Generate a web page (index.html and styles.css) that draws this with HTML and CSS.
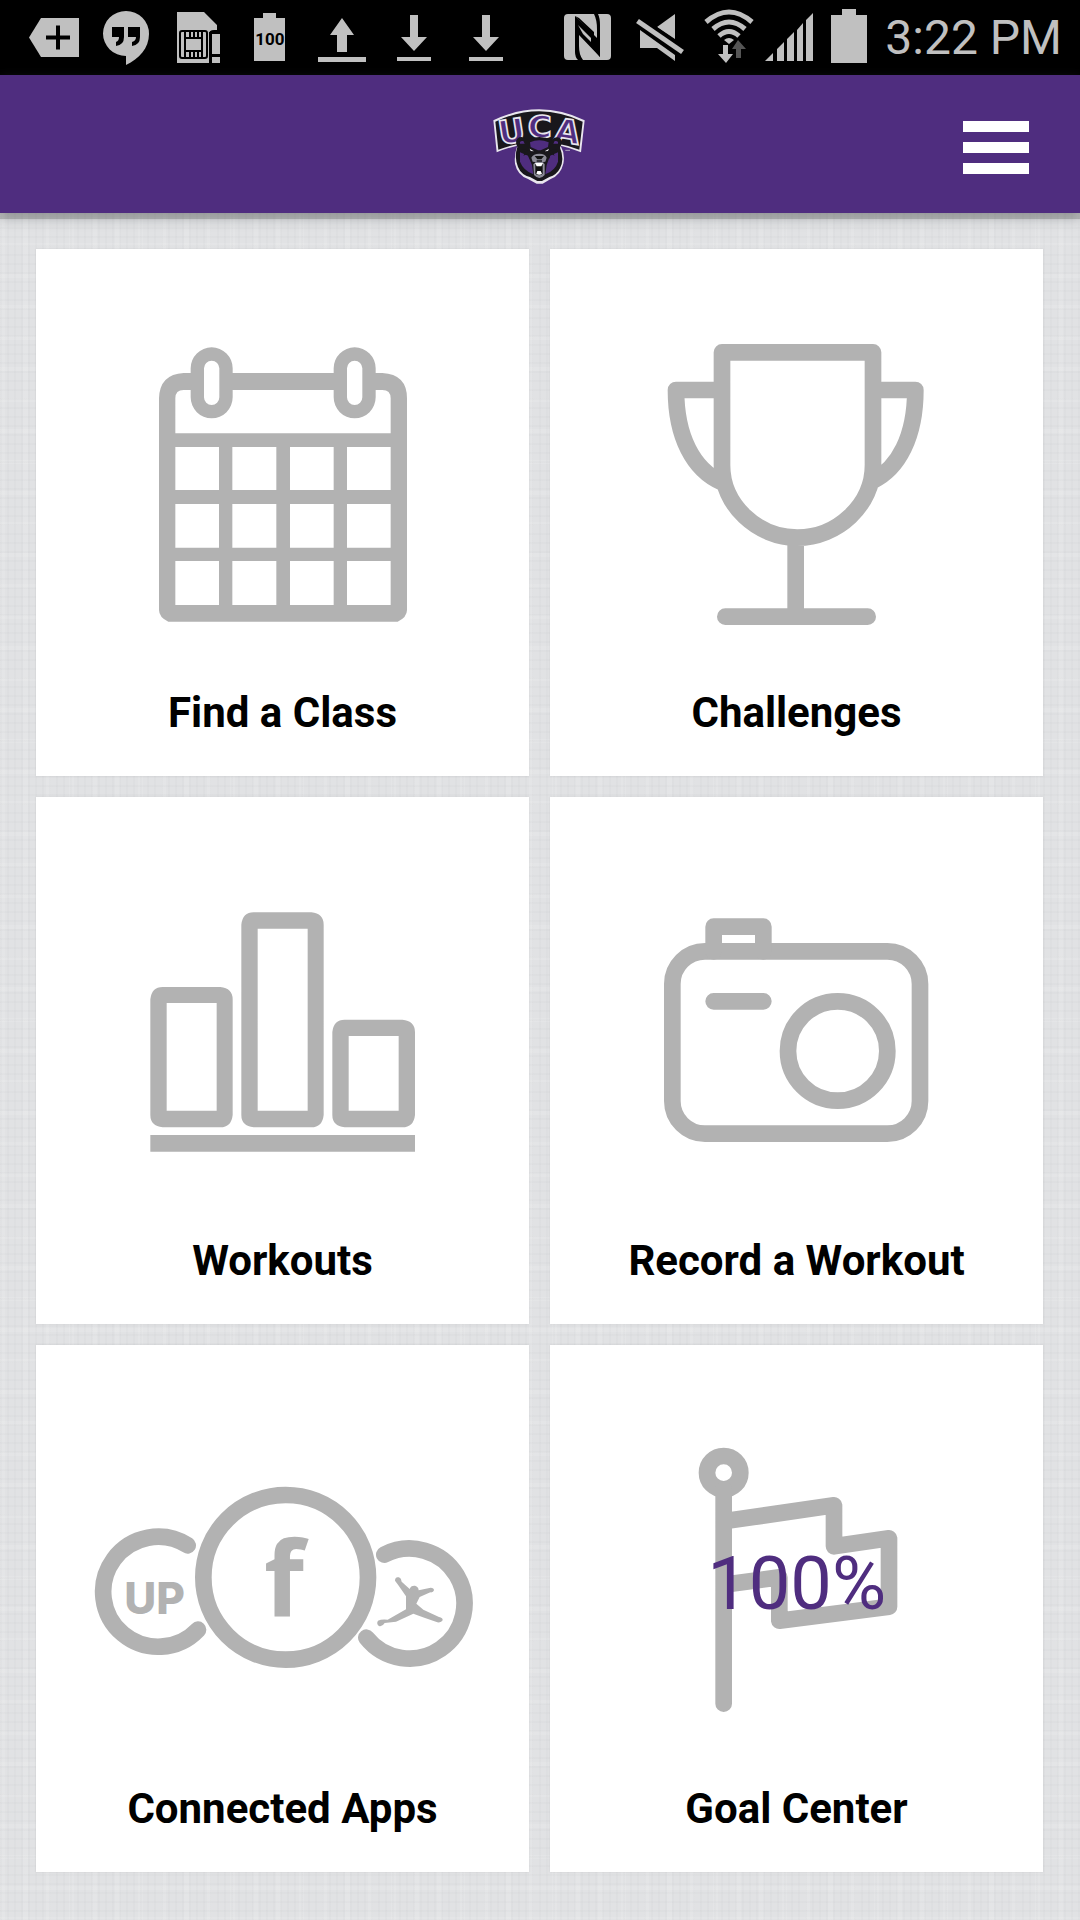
FILE: index.html
```
<!DOCTYPE html>
<html lang="en">
<head>
    <meta charset="utf-8">
    <meta name="viewport" content="width=device-width, initial-scale=1">
    <title>UCA Campus Recreation</title>
    <link rel="stylesheet" href="styles.css">
</head>
<body>
    <!-- Status bar -->
    <div class="status-bar">
        <div class="status-icons">
            <svg class="cell" viewBox="0 0 72 75"><path d="M11 37.500L23 18H61V57H23Z"/><path class="cut" d="M28 37.500H52M40 25.500V49.500"/></svg>
            <svg class="cell" viewBox="0 0 72 75"><path d="M36 11a23 22.500 0 0 1 23 23c0 14-10 25-23 31v-9a23 22.500 0 0 1 0-45Z"/><path fill="#000" d="M22 27H34V37Q34 45 26 46V42Q29 41 29 37H22ZM38 27H50V37Q50 45 42 46V42Q46 41 46 37H38Z"/></svg>
            <svg class="cell" viewBox="0 0 72 75"><path d="M15 12H42L55 25V32H47V63H15Z"/><path d="M50 34H58V54H50ZM50 57H58V63H50Z"/><g fill="none" stroke="#000" stroke-width="2"><rect x="18" y="31" width="27" height="27" rx="2"/><path d="M23 31V58M40 31V58M24 38H40M24 51H40M28 31V38M32 31V38M36 31V38M28 51V58M32 51V58M36 51V58M48 63V34Q48 31 52 31H56"/></g></svg>
            <svg class="cell" viewBox="0 0 72 75"><path d="M20 18H29V13H42V18H51V61H20Z"/><text class="battery-text" x="36" y="45">100</text></svg>
            <svg class="cell" viewBox="0 0 72 75"><path d="M36 18L48 35H41V52H31V35H24ZM12 57H60V62H12Z"/></svg>
            <svg class="cell" viewBox="0 0 72 75"><path d="M32 15H40V37H49L36 51L23 37H32ZM19 57H53V61H19Z"/></svg>
            <svg class="cell" viewBox="0 0 72 75"><path d="M32 15H40V37H49L36 51L23 37H32ZM19 57H53V61H19Z"/></svg>
        </div>
        <div class="status-icons status-right">
            <svg class="cell" viewBox="0 0 72 75"><path d="M16 14H42Q45 20 45 29V38L23 16V52Q23 57 26 60H16Q12 60 12 56V18Q12 14 16 14ZM46 14H55Q59 14 59 18V56Q59 60 55 60H31Q27 55 27 46V35L48 57V25Q48 18 46 14Z"/><path d="M23 16L40 34V39L31 31V36L48 57V48L42 38V32L27 18Z" fill="#000"/><path d="M26 25L39 38V42L31 34Z"/></svg>
            <svg class="cell" viewBox="0 0 72 75"><path d="M33 27L51 14V39ZM16 30L51 55V61L33 48H16Z"/><path d="M13.500 20L58.500 52" fill="none" stroke="#000" stroke-width="11"/><path d="M13.500 21L58.500 52" fill="none" stroke="#c0c0c0" stroke-width="5"/></svg>
            <svg class="cell-wifi" viewBox="0 0 66 75"><path d="M10 22Q33 2 56 22M17 29Q33 15 49 29M23 36Q33 27 43 36" fill="none" stroke="#c0c0c0" stroke-width="5"/><path d="M28 40Q33 36 38 40L33 44ZM27 45H32V54H37L30 63L22 54H27Z"/><path d="M42 40L50 49H45V58H40V49H36Z" fill="#555"/></svg>
            <svg class="cell-signal" viewBox="0 0 54 75"><path d="M3 61L11 53V61ZM15 49L22 42V61H15ZM25 39L32 32V61H25ZM35 30L41 23V61H35ZM44 20L51 13V61H44Z"/></svg>
            <svg class="cell-wifi" viewBox="0 0 66 75"><path d="M15 15H26V9H40V15H51V63H15Z"/></svg>
            <span class="clock">3:22 PM</span>
        </div>
    </div>

    <!-- Header -->
    <header class="header">
        <svg class="logo" viewBox="0 0 420 330" role="img" aria-label="UCA Bears">
            <path d="M70 94Q208 28 344 94L333 190Q300 176 272 170Q286 195 280 224Q272 258 242 270L218 284H200L174 270Q142 258 135 224Q132 195 142 170Q108 178 80 190Z" fill="#e9e6ee"/>
            <path d="M76 98Q208 35 338 98L328 182Q208 136 85 182Z" fill="#19171c"/>
            <g class="logo-letters">
                <text x="130" y="161" transform="rotate(-9 130 161)">U</text>
                <text x="209" y="148">C</text>
                <text x="287" y="161" transform="rotate(9 287 161)">A</text>
            </g>
            <path d="M142 174Q132 152 148 145Q162 142 170 152Q208 136 246 152Q256 142 268 146Q282 154 270 176Q284 210 270 238Q260 258 238 264L216 276H202L180 264Q154 258 144 234Q132 204 142 174Z" fill="#19171c"/>
            <path d="M150 164Q148 154 160 156L164 164ZM264 164Q266 154 254 156L250 164ZM180 160Q208 148 236 160L234 174L212 184H204L182 174ZM150 190L174 200L186 228L190 256Q160 244 150 218ZM264 190L240 200L230 228L226 256Q256 244 264 218Z" fill="#4f2d7f"/>
            <path d="M154 180L166 190L160 200L174 194L178 210L184 192L194 188ZM260 180L248 190L254 200L242 194L238 210L232 192L222 188Z" fill="#19171c"/>
            <path d="M179 179L192 187L182 186ZM237 179L224 187L234 186Z" fill="#e9e6ee"/>
            <path d="M184 206Q190 194 208 194Q226 194 230 206L226 218L216 220V214H200V220L188 218ZM190 226L198 218H218L224 226V258Q208 276 192 258Z" fill="#8b8a96"/>
            <path d="M194 201H222L214 211H202ZM196 224H218V254Q208 264 196 254Z" fill="#111"/>
            <path d="M195 222L200 232H214L219 222ZM199 254L202 246H212L216 254Q208 260 199 254Z" fill="#fff"/>
            <path d="M286 184H300" stroke="#aaa0bd" stroke-width="3"/>
        </svg>
        <button class="menu-button" type="button" aria-label="Menu">
            <span></span>
            <span></span>
            <span></span>
        </button>
    </header>

    <!-- Tiles -->
    <main class="tiles">
        <a class="tile" href="#classes">
            <svg class="tile-icon" viewBox="-312 -243 1479 1260">
                <path class="shape" fill-rule="evenodd" d="M152 129V115A63 63 0 0 1 278 115V129H581V115A63 63 0 0 1 707 115V129H727Q801 133 801 205V840Q801 862 773 875H85Q57 862 57 840V205Q59 133 131 129ZM192 115V202A23 23 0 0 0 238 202V115A23 23 0 0 0 192 115ZM621 115V202A23 23 0 0 0 667 202V115A23 23 0 0 0 621 115ZM106 310H752V205Q752 180 727 180H707V202A63 63 0 0 1 581 202V180H278V202A63 63 0 0 1 152 202V180H131Q106 180 106 205ZM106 351V480H237V351ZM277 351V480H409V351ZM450 351V480H581V351ZM621 351V480H752V351ZM106 522V653H237V522ZM277 522V653H409V522ZM450 522V653H581V522ZM621 522V653H752V522ZM106 693V825H237V693ZM277 693V825H409V693ZM450 693V825H581V693ZM621 693V825H752V693Z"/>
            </svg>
            <span class="tile-label">Find a Class</span>
        </a>
        <a class="tile" href="#challenges">
            <svg class="tile-icon" viewBox="-300 -243 1479 1260">
                <path class="line" d="M216 67H669V405C669 525 562 623 442 623C322 623 216 525 216 405ZM216 180H78C78 320 130 420 216 457M669 180H796C796 320 745 415 669 452M437 623V860M226 860H653"/>
            </svg>
            <span class="tile-label">Challenges</span>
        </a>
        <a class="tile" href="#workouts">
            <svg class="tile-icon" viewBox="-312 -309 1479 1260">
                <path class="shape" fill-rule="evenodd" d="M68 261H241Q278 265 278 298V645Q274 682 241 682H68Q31 678 31 645V298Q35 261 68 261ZM80 309V632H230V309ZM341 37H514Q551 41 551 74V645Q547 682 514 682H341Q304 678 304 645V74Q308 37 341 37ZM353 86V632H503V86ZM614 359H787Q825 363 825 396V645Q821 682 787 682H614Q577 678 577 645V396Q581 359 614 359ZM626 408V632H776V408ZM31 705H825V755H31Z"/>
            </svg>
            <span class="tile-label">Workouts</span>
        </a>
        <a class="tile" href="#record">
            <svg class="tile-icon" viewBox="-300 -309 1479 1260">
                <rect class="line" x="67" y="154" width="743" height="547" rx="98"/>
                <path class="line" d="M191 154V80H340V154M191 304H340"/>
                <circle class="line" cx="563" cy="453" r="149"/>
            </svg>
            <span class="tile-label">Record a Workout</span>
        </a>
        <a class="tile" href="#apps">
            <svg class="tile-icon" viewBox="-132 -345 1479 1260">
                <circle class="line" cx="617" cy="352" r="247"/>
                <path class="line" d="M323 256A165 165 0 1 0 354 509M913 284A165 165 0 1 1 859 533"/>
                <text class="app-up" x="224" y="461">UP</text>
                <text class="app-f" x="612" y="468">f</text>
                <path class="shape" d="M945 362Q945 349 957 352Q964 355 965 365L989 387Q992 376 1005 377Q1016 380 1016 391L1052 383Q1062 383 1062 391Q1060 398 1051 397L1019 411L1009 431L1030 449L1077 471Q1089 473 1088 481Q1084 489 1072 487L1033 473L1000 461L948 485L914 489Q907 501 897 498Q888 491 894 482Q904 477 923 479L978 448V409L954 374Z"/>
            </svg>
            <span class="tile-label">Connected Apps</span>
        </a>
        <a class="tile" href="#goals">
            <svg class="tile-icon" viewBox="-390 -255 1479 1260">
                <circle class="line" cx="131" cy="128" r="50"/>
                <path class="line" d="M131 178V821M131 274L462 226V349L627 325V530L298 572V442L131 464"/>
                <text class="goal-text" x="350" y="537">100%</text>
            </svg>
            <span class="tile-label">Goal Center</span>
        </a>
    </main>
</body>
</html>
```
FILE: styles.css
```
* {
    box-sizing: border-box;
}

body {
    margin: 0;
    min-height: 100vh;
    font-family: Roboto, "Liberation Sans", sans-serif;
    /* faint linen weave */
    background-color: #e1e2e4;
    background-image:
        repeating-linear-gradient(90deg, rgba(120,125,130,0.03) 0 2px, transparent 2px 7px),
        repeating-linear-gradient(0deg, rgba(120,125,130,0.03) 0 2px, transparent 2px 9px),
        repeating-linear-gradient(90deg, rgba(255,255,255,0.1) 0 5px, transparent 5px 23px),
        repeating-linear-gradient(0deg, rgba(255,255,255,0.1) 0 4px, transparent 4px 31px);
}

.status-bar {
    display: flex;
    justify-content: space-between;
    height: 75px;
    padding: 0 18px;
    background: #000;
    color: #c0c0c0;
}

.status-icons {
    display: flex;
    align-items: center;
}

.status-icons svg {
    height: 75px;
    fill: #c0c0c0;
}

.cell {
    width: 72px;
}

.cell-wifi {
    width: 66px;
}

.cell-signal {
    width: 54px;
}

.cut {
    fill: none;
    stroke: #000;
    stroke-width: 4;
}

.battery-text {
    font-size: 17px;
    font-weight: 700;
    text-anchor: middle;
    fill: #000;
}

.clock {
    margin-left: 3px;
    font-size: 48px;
    line-height: 75px;
    white-space: nowrap;
}

.header {
    position: relative;
    display: grid;
    grid-template-columns: 1fr auto 1fr;
    align-items: center;
    height: 138px;
    padding: 0 51px;
    background: #4f2d7f;
    box-shadow: 0 6px 0 rgba(95,98,95,0.3), 0 4px 12px rgba(60,65,70,0.4);
}

.logo {
    grid-column: 2;
    width: 140px;
    height: 110px;
}

.logo-letters {
    font-family: "DejaVu Sans", sans-serif;
    font-size: 98px;
    font-weight: 700;
    text-anchor: middle;
    fill: #4f2d7f;
    stroke: #e9e6ee;
    stroke-width: 5;
}

.menu-button {
    justify-self: end;
    display: flex;
    flex-direction: column;
    gap: 10px;
    width: 66px;
    padding: 6px 0 0;
    border: 0;
    background: none;
    cursor: pointer;
}

.menu-button span {
    height: 11px;
    background: #fff;
}

.tiles {
    display: grid;
    grid-template-columns: 1fr 1fr;
    gap: 21px;
    padding: 36px 37px 49px 36px;
}

.tile {
    display: flex;
    flex-direction: column;
    gap: 14px;
    padding-bottom: 33px;
    background: #fff;
    box-shadow: 0 0 2px rgba(0,0,0,0.08);
    color: #000;
    text-align: center;
    text-decoration: none;
}

.tile-icon {
    display: block;
    width: 100%;
}

.tile-label {
    font-size: 42px;
    font-weight: 700;
    line-height: 60px;
}

.shape {
    fill: #b2b2b2;
}

.line {
    fill: none;
    stroke: #b2b2b2;
    stroke-width: 50;
    stroke-linecap: round;
    stroke-linejoin: round;
}

.app-up,
.app-f {
    text-anchor: middle;
    fill: #b2b2b2;
}

.app-up {
    font-family: Inter, sans-serif;
    font-size: 132px;
    font-weight: 800;
}

.app-f {
    font-family: "Open Sans", sans-serif;
    font-size: 310px;
    font-weight: 700;
}

.goal-text {
    font-size: 222px;
    text-anchor: middle;
    fill: #4f2d7f;
}
```
